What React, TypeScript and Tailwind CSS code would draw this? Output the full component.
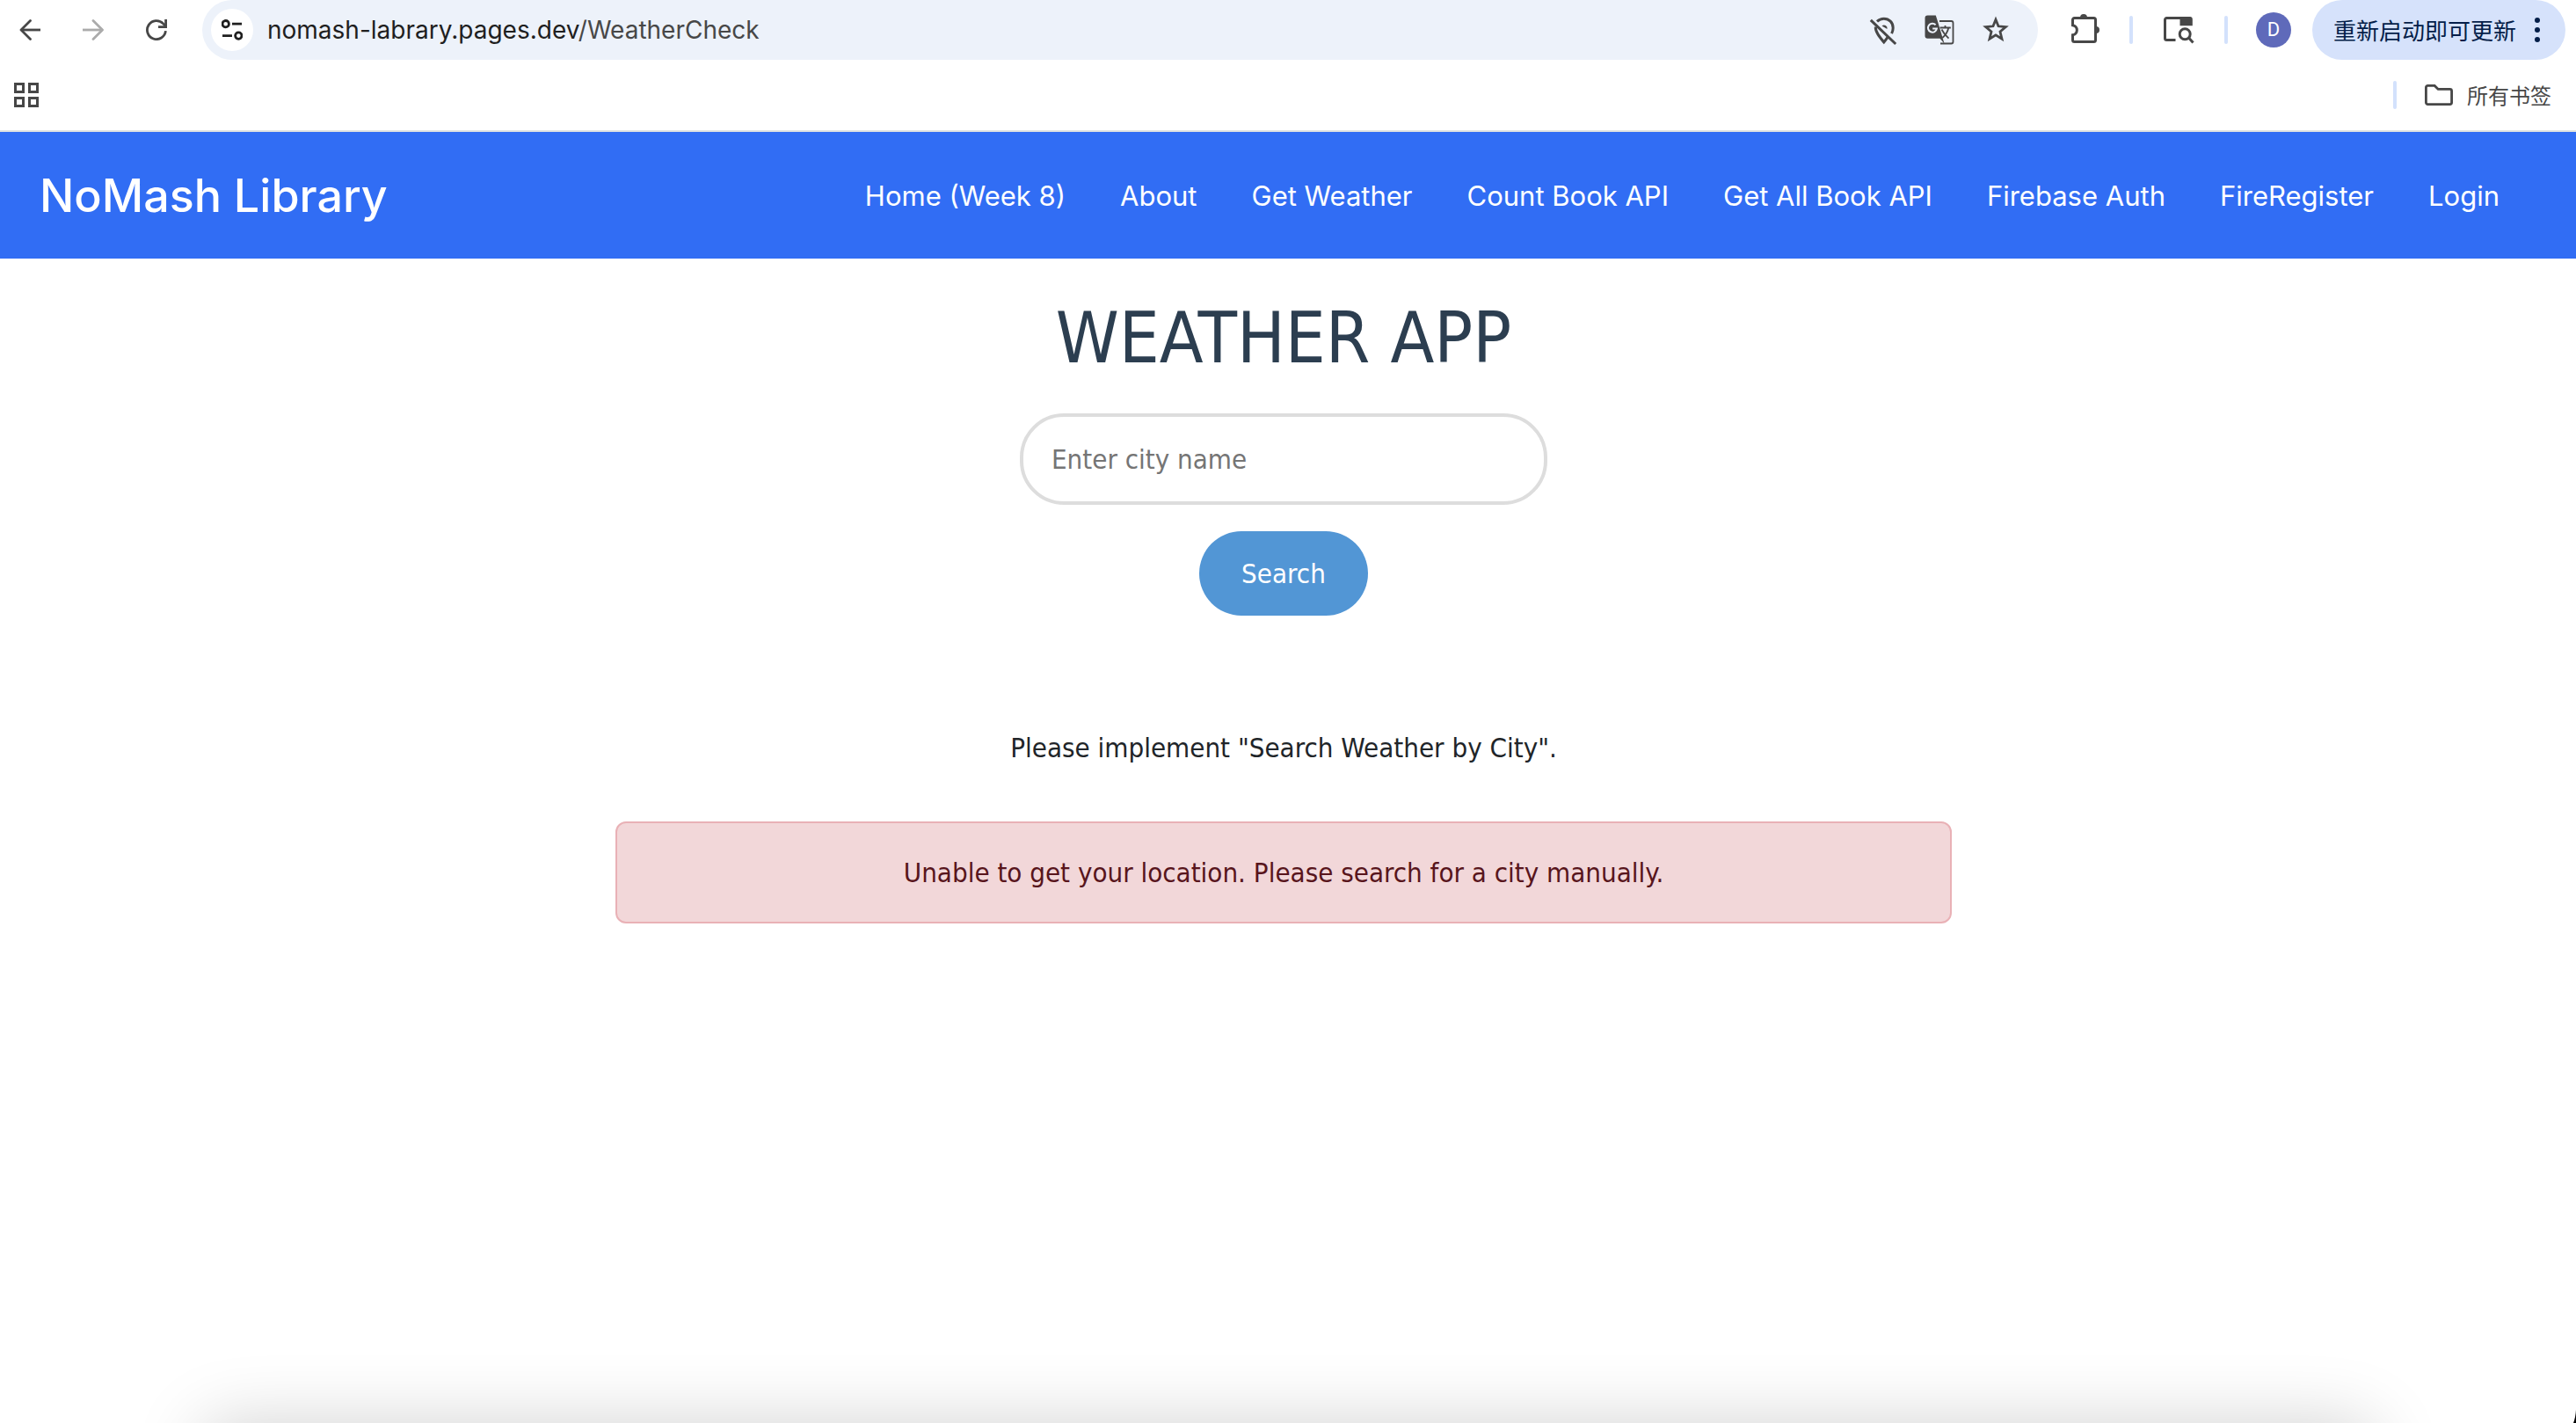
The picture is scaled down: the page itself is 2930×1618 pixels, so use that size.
import type { ReactNode } from 'react';

const navLinks = [
  'Home (Week 8)',
  'About',
  'Get Weather',
  'Count Book API',
  'Get All Book API',
  'Firebase Auth',
  'FireRegister',
  'Login',
];

function IconButton({ label, className, children }: { label: string; className?: string; children: ReactNode }) {
  return (
    <button type="button" aria-label={label} className={`shrink-0 ${className ?? ''}`}>
      {children}
    </button>
  );
}

function Separator() {
  return <span className="h-8 w-1 shrink-0 rounded-full bg-[#d3e1fc]" />;
}

function BackIcon() {
  return (
    <svg className="size-6" viewBox="0 0 24 24" fill="none" stroke="currentColor" strokeWidth="2.8">
      <path d="M24 12H2" />
      <path d="M12.5 1.5 2 12l10.5 10.5" strokeLinecap="round" strokeLinejoin="round" />
    </svg>
  );
}

function ForwardIcon() {
  return (
    <svg className="size-6" viewBox="0 0 24 24" fill="none" stroke="currentColor" strokeWidth="2.8">
      <path d="M0 12h22" />
      <path d="M12 1.5 22.5 12 12 22.5" strokeLinecap="round" strokeLinejoin="round" />
    </svg>
  );
}

function ReloadIcon() {
  return (
    <svg className="size-6" viewBox="0 0 24 24" fill="none" stroke="currentColor" strokeWidth="2.8">
      <path d="M22.4 13.2A10.5 10.5 0 1 1 19.6 4.9L22 7.4" />
      <path d="M22.6 0v8.6H14" />
    </svg>
  );
}

function TuneIcon() {
  return (
    <svg className="size-6" viewBox="0 0 24 24" fill="none" stroke="currentColor" strokeWidth="2.8">
      <circle cx="4.7" cy="5.2" r="3.7" />
      <path d="M12 5.2h11M1 18.6h11" />
      <circle cx="19.3" cy="18.6" r="3.7" />
    </svg>
  );
}

function LocationOffIcon() {
  return (
    <svg className="size-9" viewBox="0 0 36 36" fill="none" stroke="currentColor" strokeWidth="3">
      <path d="M11 8.4C13.2 6.300 16 5.200 18.800 5.200 24.600 5.200 29.200 9.500 29.200 15.800c0 2.200-.6 4.300-1.600 6.300" />
      <path d="M9.300 14.500c-.3 5.500 4.200 11 9.500 17.500 1.800-2.200 3.400-4.300 4.800-6.300" />
      <path d="M16.500 13.500a3.600 3.600 0 0 1 6 3.500z" fill="currentColor" stroke="none" />
      <path d="M3.800 6.800 32.200 34" />
    </svg>
  );
}

function TranslateIcon() {
  return (
    <svg className="size-9" viewBox="0 0 36 36" fill="none">
      <path d="M18 8h13.500a2 2 0 0 1 2 2v21.500a2 2 0 0 1-2 2H19" stroke="currentColor" strokeWidth="1.800" />
      <path
        d="M4.500 1.500h9.300l1.600 5 8.200 27.300-5-6H4.500a3 3 0 0 1-3-3V4.500a3 3 0 0 1 3-3z"
        fill="currentColor"
      />
      <path d="M13.600 12.200a5 5 0 1 0 1.300 4.300h-4.700" stroke="#edf2fa" strokeWidth="2" />
      <path d="M18.500 15.500h12.300M24.500 13v2.500M28.300 15.500c-1 5-4 9-7 11.500M20.500 17.500c2 4 5 7.500 8 10.200" stroke="currentColor" strokeWidth="1.800" />
    </svg>
  );
}

function StarIcon() {
  return (
    <svg className="size-9" viewBox="0 0 36 36" fill="none" stroke="currentColor" strokeWidth="2.800">
      <path d="M18 6.200 21 13.800l8.400.7-6.400 5.500 2 8.200-7-4.400-7 4.400 2-8.200-6.400-5.500 8.400-.7z" />
    </svg>
  );
}

function ExtensionIcon() {
  return (
    <svg className="size-9" viewBox="0 0 36 36" fill="none">
      <path
        d="M5.500 4.500h22a2 2 0 0 1 2 2v23a2 2 0 0 1-2 2h-22a2 2 0 0 1-2-2v-5.700a5.600 5.600 0 0 0 0-11.100V6.500a2 2 0 0 1 2-2z"
        stroke="currentColor"
        strokeWidth="3"
      />
      <path d="M12 4a4 4 0 0 1 8 0zM30 14a4 4 0 0 1 0 8z" fill="currentColor" />
    </svg>
  );
}

function LensIcon() {
  return (
    <svg className="size-9" viewBox="0 0 36 36" fill="none" stroke="currentColor" strokeWidth="3">
      <path d="M14.500 29.500h-10a2 2 0 0 1-2-2v-21a2 2 0 0 1 2-2h27" />
      <path d="M19.500 3h11.300a3 3 0 0 1 3 3v7.300H19.500z" fill="currentColor" stroke="none" />
      <circle cx="25.200" cy="22.800" r="6" />
      <path d="m29.500 27 5 5.500" />
    </svg>
  );
}

function AppsIcon() {
  return (
    <svg className="size-7" viewBox="0 0 28 28" fill="none" stroke="currentColor" strokeWidth="3">
      <path d="M1.500 1.500h9v9h-9zM17.500 1.500h9v9h-9zM1.500 17.500h9v9h-9zM17.500 17.500h9v9h-9z" />
    </svg>
  );
}

function FolderIcon() {
  return (
    <svg className="h-6 w-8" viewBox="0 0 32 24" fill="none" stroke="currentColor" strokeWidth="2.800">
      <path d="M3.400 1.400h7.800l4 4h13.400a2 2 0 0 1 2 2v13.200a2 2 0 0 1-2 2H3.400a2 2 0 0 1-2-2V3.400a2 2 0 0 1 2-2z" />
    </svg>
  );
}

function BrowserToolbar() {
  return (
    <header className="border-b-2 border-[#e1e3e1] text-[#474747]">
      <div className="flex h-[68px] items-center pr-3 pl-[22px]">
        <div className="flex items-center gap-12">
          <IconButton label="Back"><BackIcon /></IconButton>
          <IconButton label="Forward" className="text-[#ababab]"><ForwardIcon /></IconButton>
          <IconButton label="Reload"><ReloadIcon /></IconButton>
        </div>
        <div className="ml-10 flex h-full flex-1 items-center rounded-full bg-[#edf2fa] pr-[30px] pl-[10px]">
          <IconButton label="Site information" className="grid size-12 place-items-center rounded-full bg-white text-[#1f1f1f]">
            <TuneIcon />
          </IconButton>
          <p className="ml-4 flex-1 font-[Inter,sans-serif] text-[28px] leading-9 whitespace-nowrap">
            <span className="text-[#1f1f1f]">nomash-labrary.pages.dev</span>/WeatherCheck
          </p>
          <div className="flex gap-7">
            <IconButton label="Location blocked"><LocationOffIcon /></IconButton>
            <IconButton label="Translate"><TranslateIcon /></IconButton>
            <IconButton label="Bookmark"><StarIcon /></IconButton>
          </div>
        </div>
        <div className="ml-9 flex items-center gap-8">
          <IconButton label="Extensions"><ExtensionIcon /></IconButton>
          <Separator />
          <IconButton label="Search with Lens" className="mx-0.5"><LensIcon /></IconButton>
          <Separator />
          <IconButton label="Profile" className="size-10 rounded-full bg-[#5f6aba] text-center font-[Roboto,sans-serif] text-[22px] leading-10 text-white">
            D
          </IconButton>
        </div>
        <button
          type="button"
          className="ml-6 flex h-full items-center gap-[18px] rounded-full bg-[#d6e2fb] pr-[26px] pl-6 font-['Noto_Sans_CJK_SC',sans-serif] text-[26px] leading-9 whitespace-nowrap text-[#041e49]"
        >
          重新启动即可更新
          <svg className="h-7 w-3" viewBox="0 0 12 28" fill="currentColor">
            <circle cx="6" cy="3" r="3" />
            <circle cx="6" cy="14" r="3" />
            <circle cx="6" cy="25" r="3" />
          </svg>
        </button>
      </div>
      <div className="flex h-20 items-center justify-between pr-7 pl-4">
        <IconButton label="Apps"><AppsIcon /></IconButton>
        <div className="flex items-center gap-8">
          <Separator />
          <button type="button" className="flex items-center gap-4 font-['Noto_Sans_CJK_SC',sans-serif] text-2xl">
            <FolderIcon />
            所有书签
          </button>
        </div>
      </div>
    </header>
  );
}

function SiteNav() {
  return (
    <nav className="flex h-36 items-center justify-between bg-[#316df4] pt-0.5 pr-14 pl-[45px] font-[Inter,sans-serif] text-white">
      <a href="#" className="text-[52px] leading-none font-medium whitespace-nowrap">NoMash Library</a>
      <ul className="flex text-[31px] leading-12 whitespace-nowrap">
        {navLinks.map((label) => (
          <li key={label}>
            <a href="#" className="px-[31px]">{label}</a>
          </li>
        ))}
      </ul>
    </nav>
  );
}

function WeatherPage() {
  return (
    <main className="flex flex-col items-center pt-[42px] pr-[10px] font-['DejaVu_Sans_Condensed','DejaVu_Sans',sans-serif] text-[31px] leading-12 text-[#212529]">
      <h1 className="text-[81px] leading-24 text-[#2c3e50]">WEATHER APP</h1>
      <form className="mt-[38px] flex flex-col items-center gap-[30px]" onSubmit={(event) => event.preventDefault()}>
        <input
          type="text"
          aria-label="City name"
          placeholder="Enter city name"
          className="h-[104px] w-[600px] rounded-[50px] border-4 border-[#ddd] px-8 placeholder:text-[#757575]"
        />
        <button type="submit" className="h-24 rounded-[50px] bg-[#5296d5] px-12 text-white">Search</button>
      </form>
      <p className="mt-[126px]">Please implement "Search Weather by City".</p>
      <div role="alert" className="mt-[60px] w-full max-w-[1520px] rounded-xl border-2 border-[#e9b1b6] bg-[#f2d7d9] py-8 text-center text-[#58151c]">
        Unable to get your location. Please search for a city manually.
      </div>
    </main>
  );
}

export default function App() {
  return (
    <div className="relative min-h-screen overflow-hidden bg-white">
      <BrowserToolbar />
      <SiteNav />
      <WeatherPage />
      <div className="absolute inset-x-[230px] top-full h-40 rounded-3xl shadow-[0_0_80px_rgba(0,0,0,0.18)]" />
      <svg className="absolute right-0 bottom-0 h-4 w-1" viewBox="0 0 4 16">
        <path d="M4 1Q3.500 10 1 16h3z" fill="#000" />
      </svg>
    </div>
  );
}
